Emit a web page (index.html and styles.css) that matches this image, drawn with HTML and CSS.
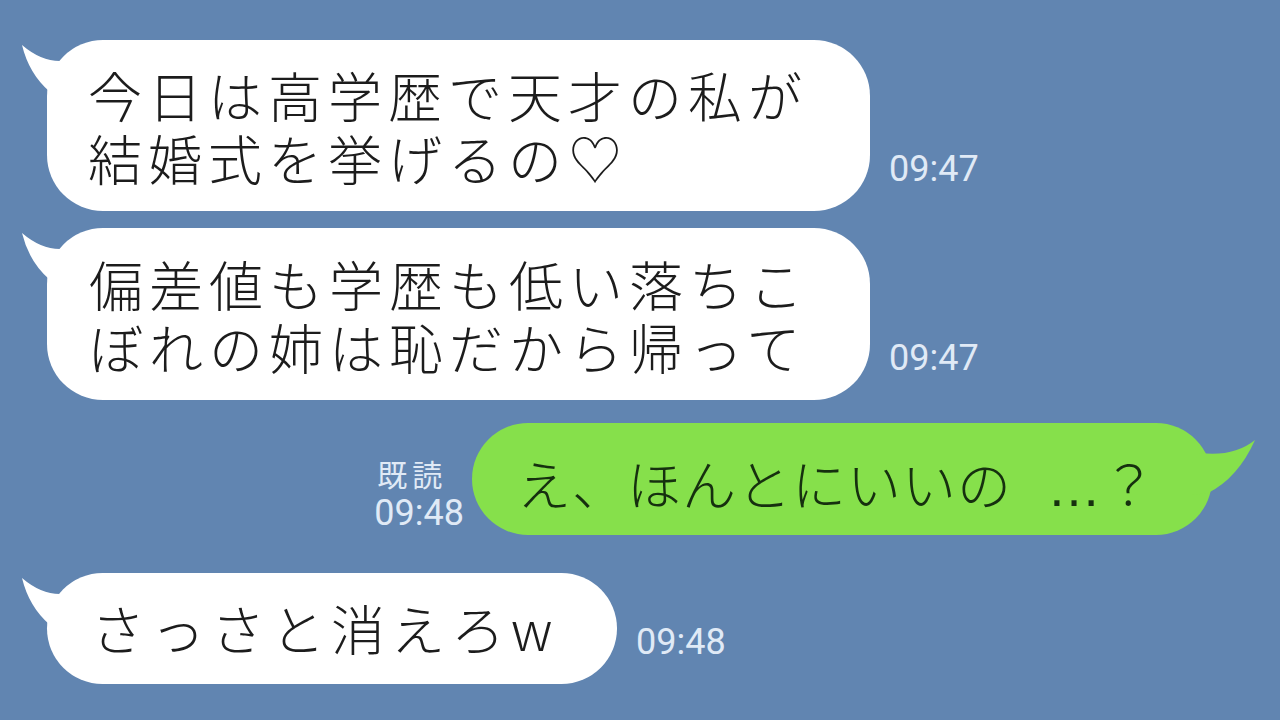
FILE: index.html
```html
<!DOCTYPE html>
<html lang="ja">

<head>
  <meta charset="utf-8">
  <title>トーク</title>
  <link rel="stylesheet" href="styles.css">
</head>

<body>
  <div class="chat">
    <div class="row">
      <div class="bubble white first">
        <svg class="tail" viewBox="0 0 70 70"><path d="M5 5 Q33 29 62 17 L62 62 L33 62 L33 52 Q12 34 5 5 Z" /></svg>
        <p>今日は高学歴で天才の私が<br>結婚式を挙げるの♡</p>
      </div>
      <span class="time">09:47</span>
    </div>

    <div class="row">
      <div class="bubble white second">
        <svg class="tail" viewBox="0 0 70 70"><path d="M5 5 Q33 29 62 17 L62 62 L33 62 L33 52 Q12 34 5 5 Z" /></svg>
        <p>偏差値も学歴も低い落ちこ<br>ぼれの姉は恥だから帰って</p>
      </div>
      <span class="time">09:47</span>
    </div>

    <div class="row mine">
      <div class="meta">
        <span class="read">既読</span>
        <span class="time">09:48</span>
      </div>
      <div class="bubble green">
        <svg class="tail-right" viewBox="0 0 70 80"><path d="M83 17 Q62 34 28 30 L20 40 L20 72 L36 70 Q66 55 83 17 Z" transform="translate(-20 0)" /></svg>
        <p>え、ほんとにいいの<span class="dots">…</span>？</p>
      </div>
    </div>

    <div class="row">
      <div class="bubble white last">
        <svg class="tail" viewBox="0 0 70 70"><path d="M5 5 Q33 29 62 17 L62 62 L33 62 L33 52 Q12 34 5 5 Z" /></svg>
        <p>さっさと消えろw</p>
      </div>
      <span class="time">09:48</span>
    </div>
  </div>
</body>

</html>
```

FILE: styles.css
```css
* {
  box-sizing: border-box;
}

body {
  margin: 0;
  height: 720px;
  overflow: hidden;
  background: #6185b1;
  font-family: "Noto Sans CJK JP", "Noto Sans", sans-serif;
}

.chat {
  display: flex;
  flex-direction: column;
  padding: 40px 0 0 47px;
}

.row {
  display: flex;
  align-items: flex-end;
  gap: 19px;
}

.bubble {
  position: relative;
  border-radius: 56px;
  color: #1c1c1c;
  font-size: 54px;
  font-weight: 300;
  letter-spacing: 6px;
  line-height: 63px;
  white-space: nowrap;
}

.bubble p {
  margin: 0;
}

.white {
  background: #fff;
}

.white .tail {
  position: absolute;
  left: -30px;
  top: 0;
  width: 70px;
  height: 70px;
  fill: #fff;
}

.first {
  width: 823px;
  height: 171px;
  padding: 23px 0 0 41px;
}

.second {
  margin-top: 17px;
  width: 823px;
  height: 172px;
  padding: 24px 0 0 42px;
}

.last {
  margin-top: 38px;
  width: 570px;
  height: 111px;
  padding: 23px 0 0 44px;
}

.time {
  margin-bottom: 24px;
  font-family: Roboto, "Liberation Sans", sans-serif;
  font-size: 36px;
  line-height: 36px;
  color: #e0eaf6;
}

.mine {
  justify-content: flex-end;
  padding-right: 68px;
  gap: 8px;
}

.meta {
  display: flex;
  flex-direction: column;
  margin-bottom: 2px;
  line-height: 40px;
  color: #e0eaf6;
}

.meta .read {
  font-size: 30px;
  letter-spacing: 5px;
  padding-left: 3px;
}

.meta .time {
  margin: 0;
  line-height: 40px;
}

.green {
  margin-top: 23px;
  width: 740px;
  height: 112px;
  padding: 28px 0 0 45px;
  background: #86e04b;
  color: #16300f;
  letter-spacing: 1px;
}

.green .dots {
  font-family: "Liberation Sans", sans-serif;
  padding-left: 35px;
}

.green .tail-right {
  position: absolute;
  left: 720px;
  top: 0;
  width: 70px;
  height: 80px;
  fill: #86e04b;
}
```
